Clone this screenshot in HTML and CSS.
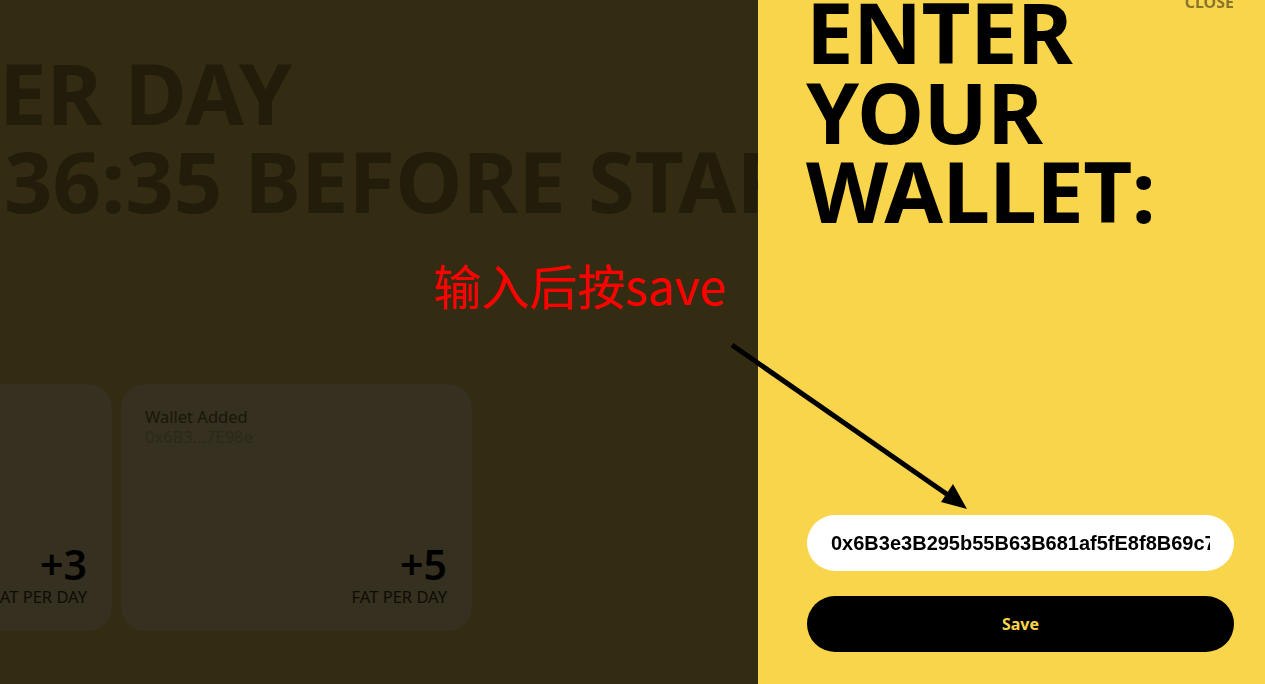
FILE: index.html
```html
<!DOCTYPE html>
<html lang="en">
<head>
<meta charset="utf-8">
<title>Enter your wallet</title>
<link rel="stylesheet" href="styles.css">
</head>
<body>
<main class="page">
  <h1 class="countdown">
    <span class="line line-1">ER DAY</span>
    <span class="line line-2">36:35 BEFORE START</span>
  </h1>
  <div class="cards">
    <article class="card">
      <div class="card-top"></div>
      <div class="card-bottom">
        <div class="card-amount">+3</div>
        <div class="card-unit">FAT PER DAY</div>
      </div>
    </article>
    <article class="card">
      <div class="card-top">
        <div class="card-title">Wallet Added</div>
        <div class="card-sub">0x6B3...7E98e</div>
      </div>
      <div class="card-bottom">
        <div class="card-amount">+5</div>
        <div class="card-unit">FAT PER DAY</div>
      </div>
    </article>
  </div>
</main>

<aside class="drawer">
  <button class="close" type="button">CLOSE</button>
  <h2 class="drawer-title">ENTER<br>YOUR<br>WALLET:</h2>
  <form class="wallet-form">
    <input class="wallet-input" type="text" value="0x6B3e3B295b55B63B681af5fE8f8B69c7E98e">
    <button class="save" type="button">Save</button>
  </form>
</aside>

<div class="annotation">输入后按save</div>
<svg class="arrow" width="1265" height="684" viewBox="0 0 1265 684">
  <line x1="732" y1="345" x2="948" y2="495" stroke="#000" stroke-width="5"/>
  <polygon points="967,509 953,484 941,502" fill="#000"/>
</svg>
</body>
</html>
```

FILE: styles.css
```css
html, body {
  margin: 0;
  padding: 0;
}
body {
  width: 1265px;
  height: 684px;
  overflow: hidden;
  background: #332c12;
  font-family: "Noto Sans", "Open Sans", sans-serif;
  position: relative;
}
.page {
  display: flex;
  flex-direction: column;
}
.countdown {
  margin: 48px 0 0;
  font-size: 85px;
  line-height: 88px;
  font-weight: 700;
  color: #221d0a;
  white-space: nowrap;
}
.line {
  display: block;
}
.line-1 {
  margin-left: -1px;
}
.line-2 {
  margin-left: 4px;
}
.cards {
  display: flex;
  gap: 9px;
  margin: 160px 0 0 -239px;
}
.card {
  width: 351px;
  height: 247px;
  box-sizing: border-box;
  flex: none;
  border-radius: 24px;
  background: #35301f;
  padding: 23px 25px 23px 24px;
  display: flex;
  flex-direction: column;
  justify-content: space-between;
}
.card-title {
  font-size: 16.5px;
  line-height: 20px;
  color: #191707;
}
.card-sub {
  font-size: 16.5px;
  line-height: 20px;
  color: #2d2918;
}
.card-bottom {
  text-align: right;
}
.card-amount {
  font-size: 41px;
  line-height: 44px;
  font-weight: 600;
  color: #000;
}
.card-unit {
  font-size: 16.5px;
  line-height: 22px;
  margin-top: 0;
  color: #0d0c05;
}
.drawer {
  position: fixed;
  top: 0;
  right: 0;
  bottom: 0;
  width: 507px;
  box-sizing: border-box;
  padding: 0 31px 32px 49px;
  background: #f9d54b;
  display: flex;
  flex-direction: column;
  z-index: 2;
}
.close {
  position: absolute;
  top: -6px;
  right: 31px;
  background: none;
  border: 0;
  padding: 0;
  font-family: "Noto Sans", sans-serif;
  font-size: 16px;
  line-height: 16px;
  font-weight: 700;
  color: rgba(0, 0, 0, 0.45);
}
.drawer-title {
  margin: -8px 0 0 -1px;
  font-size: 85px;
  line-height: 79.5px;
  font-weight: 700;
  color: #000;
  letter-spacing: -0.6px;
}
.wallet-form {
  margin-top: auto;
  display: flex;
  flex-direction: column;
  gap: 25px;
}
.wallet-input {
  height: 56px;
  box-sizing: border-box;
  border: 0;
  border-radius: 28px;
  background: #fff;
  padding: 0 24px;
  font-family: "Liberation Sans", Arial, sans-serif;
  font-size: 20px;
  font-weight: 700;
  color: #000;
  outline: none;
  width: 100%;
}
.save {
  height: 56px;
  border: 0;
  border-radius: 28px;
  background: #000;
  color: #f9d54b;
  font-family: "Noto Sans", sans-serif;
  font-size: 16px;
  font-weight: 700;
}
.annotation {
  position: absolute;
  left: 433px;
  top: 260px;
  font-family: "Noto Sans CJK SC", sans-serif;
  font-size: 48px;
  line-height: 48px;
  color: #ff0000;
  z-index: 3;
  white-space: nowrap;
}
.arrow {
  position: absolute;
  left: 0;
  top: 0;
  z-index: 3;
  pointer-events: none;
}
```
